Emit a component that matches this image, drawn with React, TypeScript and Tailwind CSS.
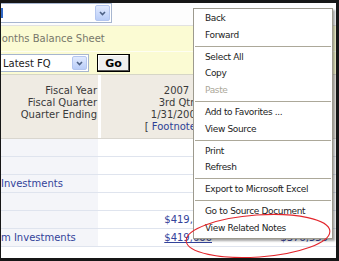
import React from 'react';

function Chevron() {
  return (
    <svg width="7" height="5" viewBox="0 0 7 5">
      <path d="M1 1 L3.5 3.5 L6 1" fill="none" stroke="#4d6185" strokeWidth="1.6" />
    </svg>
  );
}

function DropButton({ className }: { className: string }) {
  return (
    <div
      className={`flex items-center justify-center rounded-[2px] border border-[#b4c6ef] bg-gradient-to-b from-[#e1eafe] to-[#b9cdf8] ${className}`}
    >
      <Chevron />
    </div>
  );
}

function MenuItem({ label, disabled }: { label: string; disabled?: boolean }) {
  return (
    <div className={`h-[16.8px] leading-[16.8px] pl-[11px] whitespace-nowrap ${disabled ? 'text-[#aca899]' : 'text-[#1c1c1c]'}`}>
      {label}
    </div>
  );
}

function Separator() {
  return (
    <div className="h-[5px] flex items-center px-[1px]">
      <div className="h-px w-full bg-[#aca899]" />
    </div>
  );
}

const rows = [
  { label: '', value: '', next: '' },
  { label: '', value: '', next: '' },
  { label: 'Investments', value: '', next: '' },
  { label: '', value: '', next: '' },
  { label: '', value: '$419,000', next: '$376,555' },
  { label: 'm Investments', value: '$419,000', next: '$376,555', link: true },
];

export default function App() {
  return (
    <div className="relative w-[339px] h-[261px] overflow-hidden bg-white border-t-[3px] border-b-[3px] border-l border-r-[3px] border-[#161616] font-['DejaVu_Sans',sans-serif] text-[10px] text-[#333]">
      {/* top select */}
      <div className="h-[23px] border-b border-[#e2e2e2] bg-[#fdfdfd] overflow-hidden">
        <div className="-ml-[40px] w-[151px] h-[20px] border border-[#a7b6cf] bg-white flex items-center pr-px">
          <div className="w-[41px] h-[10px] bg-[#3169c6]" />
          <div className="flex-1" />
          <DropButton className="w-[15px] h-[16px]" />
        </div>
      </div>

      {/* title band */}
      <div className="h-[26px] bg-[#fbfbd3] border-b border-[#fefef2] flex items-center overflow-hidden">
        <span className="-ml-[8px] whitespace-nowrap text-[#77776a]">Months Balance Sheet</span>
      </div>

      {/* period picker */}
      <div className="h-[23px] bg-[#fbfbd3] border-b border-[#d6d6c6] flex items-start overflow-hidden">
        <div className="-ml-[20px] mt-[2px] w-[108px] h-[18px] border border-[#a7b6cf] bg-white flex items-center pl-[21px] pr-px">
          <span className="flex-1 text-[#222]">Latest FQ</span>
          <DropButton className="w-[15px] h-[14px]" />
        </div>
        <button className="ml-[8px] mt-[2px] w-[33px] h-[18px] border border-black bg-[#efefef] shadow-[inset_-1px_-1px_0_#555,inset_1px_1px_0_#fff] text-[11px] font-bold text-black leading-none">
          Go
        </button>
      </div>

      {/* header */}
      <div className="h-[64px] border-b border-[#d9d6cf] flex bg-[#efebe3]">
        <div className="w-[97px] pt-[10px] pr-px text-right leading-[12px] text-[#3a3a3a] whitespace-nowrap">
          <div>Fiscal Year</div>
          <div>Fiscal Quarter</div>
          <div>Quarter Ending</div>
        </div>
        <div className="w-[3px] bg-white" />
        <div className="w-[151px] pt-[10px] text-center leading-[12px] text-[#3a3a3a] whitespace-nowrap">
          <div>2007</div>
          <div>3rd Qtr</div>
          <div>1/31/2007</div>
          <div>
            [ <span className="text-[#2c3f96]">Footnotes</span> ]
          </div>
        </div>
        <div className="w-[3px] bg-white" />
        <div className="flex-1" />
      </div>

      {/* rows */}
      {rows.map((r, i) => (
        <div key={i} className="h-[18px] border-b border-[#dfe4ee] flex leading-[17px]">
          <div className="w-[97px] bg-[#f4f5f9] text-[#33439a] whitespace-nowrap overflow-hidden">{r.label}</div>
          <div className="w-[3px] bg-white" />
          <div className={`w-[151px] text-right pr-[40px] text-[#33439a] ${r.link ? 'underline' : ''}`}>{r.value}</div>
          <div className="flex-1 text-right pr-[8px] text-[#33439a]">{r.next}</div>
        </div>
      ))}

      {/* context menu */}
      <div className="absolute left-[192px] top-[5px] w-[140px] bg-white border border-[#9d9a8e] shadow-[2px_2px_2px_rgba(0,0,0,0.35)] py-px text-[9px] tracking-[-0.35px]">
        <MenuItem label="Back" />
        <MenuItem label="Forward" />
        <Separator />
        <MenuItem label="Select All" />
        <MenuItem label="Copy" />
        <MenuItem label="Paste" disabled />
        <Separator />
        <MenuItem label="Add to Favorites ..." />
        <MenuItem label="View Source" />
        <Separator />
        <MenuItem label="Print" />
        <MenuItem label="Refresh" />
        <Separator />
        <MenuItem label="Export to Microsoft Excel" />
        <Separator />
        <MenuItem label="Go to Source Document" />
        <MenuItem label="View Related Notes" />
      </div>

      {/* red highlight ellipse */}
      <svg className="absolute left-0 top-0 pointer-events-none" width="335" height="255">
        <ellipse cx="257" cy="233" rx="72" ry="21" fill="none" stroke="#e3262c" strokeWidth="1.1" transform="rotate(-4 257 233)" />
      </svg>
    </div>
  );
}
